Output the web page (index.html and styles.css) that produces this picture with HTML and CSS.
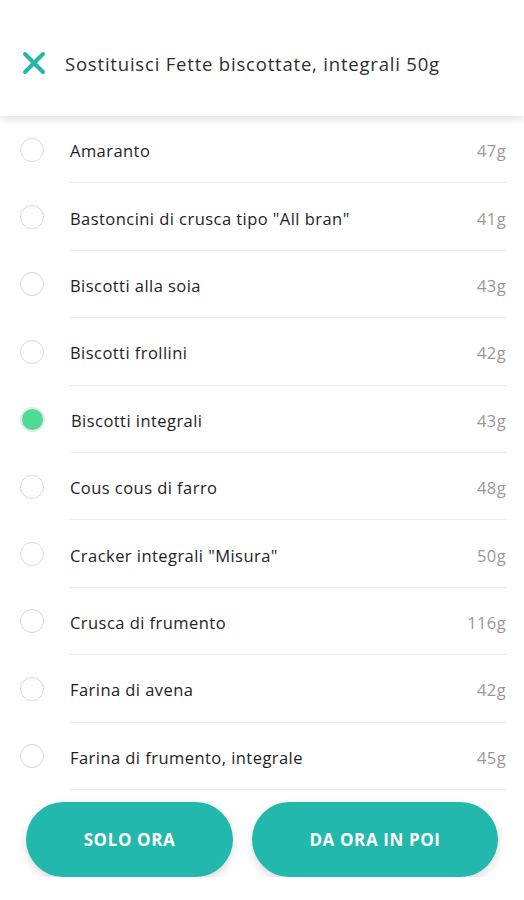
FILE: index.html
```html
<!DOCTYPE html>
<html lang="it">
<head>
  <meta charset="UTF-8" />
  <meta name="viewport" content="width=device-width, initial-scale=1.0"/>
  <title>Sostituisci</title>
  <link rel="stylesheet" href="styles.css">
</head>
<body>

  <div class="header">
    <svg class="close" width="24" height="24" viewBox="0 0 24 24">
      <path d="M3 3 L21 21 M21 3 L3 21" stroke="#25b5ac" stroke-width="4" stroke-linecap="round" fill="none"/>
    </svg>
    <h1>Sostituisci Fette biscottate, integrali 50g</h1>
  </div>

  <ul class="list">
    <li class="row"><span class="radio"></span><div class="info"><span class="name">Amaranto</span><span class="qty">47g</span></div></li>
    <li class="row"><span class="radio"></span><div class="info"><span class="name">Bastoncini di crusca tipo "All bran"</span><span class="qty">41g</span></div></li>
    <li class="row"><span class="radio"></span><div class="info"><span class="name">Biscotti alla soia</span><span class="qty">43g</span></div></li>
    <li class="row"><span class="radio"></span><div class="info"><span class="name">Biscotti frollini</span><span class="qty">42g</span></div></li>
    <li class="row"><span class="radio checked"></span><div class="info"><span class="name">Biscotti integrali</span><span class="qty">43g</span></div></li>
    <li class="row"><span class="radio"></span><div class="info"><span class="name">Cous cous di farro</span><span class="qty">48g</span></div></li>
    <li class="row"><span class="radio"></span><div class="info"><span class="name">Cracker integrali "Misura"</span><span class="qty">50g</span></div></li>
    <li class="row"><span class="radio"></span><div class="info"><span class="name">Crusca di frumento</span><span class="qty">116g</span></div></li>
    <li class="row"><span class="radio"></span><div class="info"><span class="name">Farina di avena</span><span class="qty">42g</span></div></li>
    <li class="row"><span class="radio"></span><div class="info"><span class="name">Farina di frumento, integrale</span><span class="qty">45g</span></div></li>
  </ul>

  <div class="actions">
    <button class="btn btn-now">Solo ora</button>
    <button class="btn btn-always">Da ora in poi</button>
  </div>

</body>
</html>
```

FILE: styles.css
```css
body {
  font-family: "Open Sans", Lato, sans-serif;
  margin: 0;
  background: white;
  color: #222;
}

.header {
  height: 116px;
  display: flex;
  align-items: center;
  padding: 10px 22px 0;
  box-sizing: border-box;
  background: white;
  box-shadow: 0 3px 8px rgba(0,0,0,0.12);
  position: relative;
}

.close {
  flex-shrink: 0;
  margin-right: 19px;
}

h1 {
  margin: 0;
  font-size: 18.5px;
  font-weight: normal;
  letter-spacing: 0.8px;
  color: #2e2e2e;
}

.list {
  list-style: none;
  margin: 0;
  padding: 0;
}

.row {
  height: 67.4px;
  display: flex;
  align-items: center;
}

.radio {
  width: 22px;
  height: 22px;
  border: 1.5px solid #d9d9d9;
  border-radius: 50%;
  margin: 0 26px 0 20px;
  flex-shrink: 0;
  box-sizing: content-box;
}

.radio.checked {
  background: #4edc95;
  border: 2px solid #e6e6e6;
  width: 21px;
  height: 21px;
  margin-left: 20px;
  margin-right: 26px;
}

.info {
  flex: 1;
  height: 100%;
  display: flex;
  align-items: center;
  justify-content: space-between;
  border-bottom: 1px solid #ececec;
  margin-right: 18px;
  box-sizing: border-box;
  padding-top: 3px;
}

.name {
  font-size: 16.5px;
  letter-spacing: 0.45px;
  color: #1e1e1e;
}

.qty {
  font-size: 16.5px;
  letter-spacing: 0.4px;
  color: #999;
}

.actions {
  display: flex;
  gap: 19px;
  padding: 12px 26px 0;
}

.btn {
  height: 75px;
  border: none;
  border-radius: 38px;
  background-color: #22b8ad;
  color: white;
  font-family: "Open Sans", sans-serif;
  font-size: 17px;
  font-weight: bold;
  letter-spacing: 0.6px;
  text-transform: uppercase;
  box-shadow: 0 4px 8px rgba(0,0,0,0.15);
}

.btn-now {
  width: 207px;
}

.btn-always {
  width: 246px;
}
```
